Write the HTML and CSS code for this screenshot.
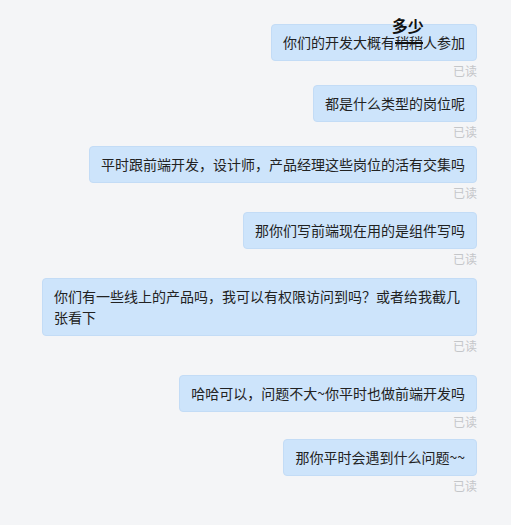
FILE: index.html
```html
<!DOCTYPE html>
<html lang="zh-CN">
<head>
<meta charset="UTF-8">
<meta name="viewport" content="width=device-width, initial-scale=1.0">
<title>Chat</title>
<link rel="stylesheet" href="styles.css">
</head>
<body>
<div class="chat">
    <div class="msg">
        <div class="bubble">你们的开发大概有<span class="edit"><del>稍稍</del><span class="note">多少</span></span>人参加</div>
        <div class="read">已读</div>
    </div>
    <div class="msg">
        <div class="bubble">都是什么类型的岗位呢</div>
        <div class="read">已读</div>
    </div>
    <div class="msg gap-md">
        <div class="bubble">平时跟前端开发，设计师，产品经理这些岗位的活有交集吗</div>
        <div class="read">已读</div>
    </div>
    <div class="msg gap-md">
        <div class="bubble">那你们写前端现在用的是组件写吗</div>
        <div class="read">已读</div>
    </div>
    <div class="msg gap-lg">
        <div class="bubble">你们有一些线上的产品吗，我可以有权限访问到吗？或者给我截几张看下</div>
        <div class="read">已读</div>
    </div>
    <div class="msg gap-sm">
        <div class="bubble">哈哈可以，问题不大~你平时也做前端开发吗</div>
        <div class="read">已读</div>
    </div>
    <div class="msg">
        <div class="bubble">那你平时会遇到什么问题~~</div>
        <div class="read">已读</div>
    </div>
</div>
</body>
</html>
```

FILE: styles.css
```css
body {
    font-family: "Noto Sans CJK SC", "Noto Sans", sans-serif;
    margin: 0;
    padding: 0;
    background-color: #f4f5f7;
}
.chat {
    display: flex;
    flex-direction: column;
    align-items: flex-end;
    padding: 24px 34px 0 20px;
}
.msg {
    display: flex;
    flex-direction: column;
    align-items: flex-end;
    margin-bottom: 6px;
}
.msg.gap-sm {
    margin-bottom: 9px;
}
.msg.gap-md {
    margin-bottom: 11px;
}
.msg.gap-lg {
    margin-bottom: 21px;
}
.bubble {
    box-sizing: border-box;
    max-width: 435px;
    padding: 7px 11px;
    font-size: 14px;
    line-height: 21px;
    color: #222;
    background-color: #cde4fb;
    border: 1px solid #c3dcf6;
    border-radius: 4px;
}
.read {
    margin-top: 2px;
    font-size: 12px;
    line-height: 16px;
    color: #c4c6c9;
}
.edit {
    position: relative;
}
.edit del {
    text-decoration-color: #111;
    text-decoration-thickness: 2px;
}
.note {
    position: absolute;
    left: 50%;
    top: -17px;
    transform: translateX(-54%);
    font-size: 16px;
    font-weight: bold;
    line-height: 20px;
    color: #111;
    white-space: nowrap;
}
```
